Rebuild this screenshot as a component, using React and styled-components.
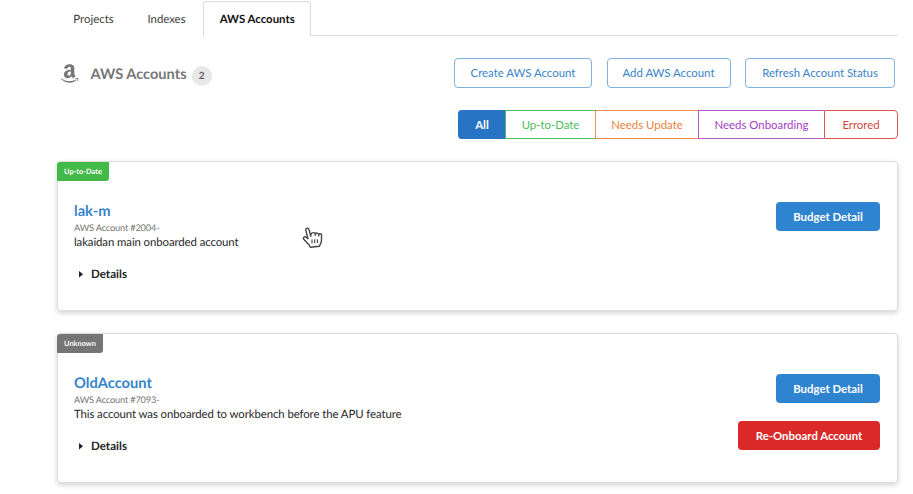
import React from 'react';
import styled, { createGlobalStyle } from 'styled-components';
import { FaAmazon } from 'react-icons/fa';

const Global = createGlobalStyle`
  * { box-sizing: border-box; }
  body {
    margin: 0;
    background: #fff;
    color: #262627;
    font: 11.4px/16px Lato, sans-serif;
    text-rendering: geometricPrecision;
    overflow: hidden;
  }
`;

const Page = styled.main`
  width: 913px;
  height: 494px;
  padding: 1px 15px 0 57px;
  overflow: hidden;
`;

const Tabs = styled.nav`
  display: flex;
  height: 35px;
  border-bottom: 1px solid #dcdcdd;
`;

const Tab = styled.a`
  width: ${(p) => p.$width}px;
  height: 35px;
  padding-top: ${(p) => (p.$active ? 10 : 11)}px;
  text-align: center;
  white-space: nowrap;
  color: ${(p) => (p.$active ? '#111' : '#3c3c3d')};
  font-weight: ${(p) => (p.$active ? 700 : 400)};
  border: ${(p) => (p.$active ? '1px solid #d8d9da' : '0')};
  border-bottom: 0;
  border-radius: 4px 4px 0 0;
  background: #fff;
`;

const Header = styled.header`
  display: flex;
  justify-content: space-between;
  height: 30px;
  margin: 22px 3px 0 2px;
`;

const Title = styled.h3`
  display: flex;
  align-items: center;
  height: 20px;
  margin: 7px 0 0;
  font-size: 14.6px;
  font-weight: 700;
  color: #767676;
  svg { margin: -3px 10.5px 0 0; }
`;

const Count = styled.span`
  width: 20px;
  height: 20px;
  margin: 1px 0 0 5px;
  border-radius: 10px;
  background: #e8e8e8;
  color: #666;
  font-size: 10px;
  line-height: 20px;
  text-align: center;
`;

const Actions = styled.div`
  display: flex;
  gap: 14.5px;
`;

const OutlineButton = styled.button`
  width: ${(p) => p.$width}px;
  height: 30px;
  padding: 0;
  border: 1px solid #7fb0de;
  border-radius: 4px;
  background: #fff;
  color: #3a83c8;
  font: inherit;
  white-space: nowrap;
`;

const Filters = styled.div`
  display: flex;
  justify-content: flex-end;
  margin-top: 22px;
`;

const Filter = styled.button`
  width: ${(p) => p.$width}px;
  height: 29px;
  padding: 0;
  border: 1px solid ${(p) => p.$border};
  border-right-width: ${(p) => (p.$last ? 1 : 0)}px;
  border-radius: ${(p) => (p.$first ? '4px 0 0 4px' : p.$last ? '0 4px 4px 0' : 0)};
  background: ${(p) => (p.$first ? '#2674c3' : '#fff')};
  color: ${(p) => p.$color};
  font: inherit;
  font-weight: ${(p) => (p.$first ? 700 : 400)};
  white-space: nowrap;
`;

const Cards = styled.div`
  display: grid;
  gap: 22px;
  margin-top: 22px;
`;

const Card = styled.section`
  position: relative;
  display: flex;
  justify-content: space-between;
  height: 150px;
  padding: 40px 17px 0 16px;
  border: 1px solid #dcddde;
  border-radius: 4px;
  box-shadow: 0 2px 5px rgba(34, 36, 38, 0.2);
`;

const Status = styled.span`
  position: absolute;
  top: 0;
  left: -1px;
  width: ${(p) => p.$width}px;
  height: 19px;
  border-radius: 3px 0 3px 0;
  background: ${(p) => p.$color};
  color: #fff;
  font-size: 7.4px;
  font-weight: 700;
  line-height: 20px;
  text-align: center;
`;

const Info = styled.div`
  display: flex;
  flex-direction: column;
  align-items: flex-start;
  padding-top: 1px;
  white-space: nowrap;
`;

const Name = styled.h4`
  height: 18px;
  margin: 0;
  color: #3584cb;
  font-size: 14.7px;
  line-height: 16px;
`;

const AccountId = styled.div`
  height: 14px;
  color: #757575;
  font-size: 9.2px;
  line-height: 13px;
  letter-spacing: -0.15px;
`;

const Description = styled.div`
  letter-spacing: -0.09px;
`;

const Details = styled.div`
  display: flex;
  align-items: center;
  gap: 8px;
  margin: 16px 0 0 5px;
  font-weight: 700;
  font-size: 11.6px;
`;

const CardActions = styled.div`
  display: flex;
  flex-direction: column;
  align-items: flex-end;
  gap: 18px;
`;

const SolidButton = styled.button`
  width: ${(p) => p.$width}px;
  height: 29px;
  padding: 0;
  border: 0;
  border-radius: 4px;
  background: ${(p) => p.$color};
  color: #fff;
  font: inherit;
  font-weight: 700;
  white-space: nowrap;
`;

const Cursor = styled.svg`
  position: absolute;
  left: 244px;
  top: 64px;
`;

const filters = [
  { label: 'All', width: 47, color: '#fff', border: '#2674c3' },
  { label: 'Up-to-Date', width: 90, color: '#4bbd59', border: '#4bbd59' },
  { label: 'Needs Update', width: 103, color: '#ec7f40', border: '#f08a50' },
  { label: 'Needs Onboarding', width: 126, color: '#a440c4', border: '#b05bcd' },
  { label: 'Errored', width: 74, color: '#d4453f', border: '#dc5752' },
];

function HandCursor() {
  return (
    <Cursor width="22" height="24" viewBox="0 0 22 24">
      <path
        d="M8.6 9.5L7 3.6C6.3 1.2 3.2 2 3.9 4.6L6 12.6L4 11.2C2.2 10 .5 12 2 13.6L6.5 18.2L8.5 21.3L17.4 20.3L19.4 15.5L19.6 9.2C19.5 7.3 17 7.3 16.8 8.8C16.6 6.9 13.8 6.4 13.3 8C12.8 6.1 9.8 6.2 9.2 8Z"
        fill="#fff" stroke="#444" strokeWidth="1.4" strokeLinejoin="round"
      />
      <path d="M8.6 9.5L9 10.8M13.2 8V10M16.8 9V10.4M10 13.5V17.5M12.7 13.3V17.3M15.4 13.2V17.1" fill="none" stroke="#444" strokeWidth="1.1" />
    </Cursor>
  );
}

function AccountCard({ status, statusColor, statusWidth, name, id, description, reonboard, cursor }) {
  return (
    <Card>
      <Status $color={statusColor} $width={statusWidth}>{status}</Status>
      <Info>
        <Name>{name}</Name>
        <AccountId>{id}</AccountId>
        <Description>{description}</Description>
        <Details>
          <svg width="4" height="8" viewBox="0 0 4 8"><path d="M0 0L4 3.3L0 6.6Z" fill="#222" /></svg>
          Details
        </Details>
      </Info>
      <CardActions>
        <SolidButton $width={104} $color="#2f84cf">Budget Detail</SolidButton>
        {reonboard && <SolidButton $width={142} $color="#db2828">Re-Onboard Account</SolidButton>}
      </CardActions>
      {cursor && <HandCursor />}
    </Card>
  );
}

export default function App() {
  return (
    <Page>
      <Global />
      <Tabs>
        <Tab $width={73}>Projects</Tab>
        <Tab $width={73}>Indexes</Tab>
        <Tab $width={108.4} $active>AWS Accounts</Tab>
      </Tabs>
      <Header>
        <Title>
          <FaAmazon size={21} />
          AWS Accounts
          <Count>2</Count>
        </Title>
        <Actions>
          <OutlineButton $width={138}>Create AWS Account</OutlineButton>
          <OutlineButton $width={124}>Add AWS Account</OutlineButton>
          <OutlineButton $width={150}>Refresh Account Status</OutlineButton>
        </Actions>
      </Header>
      <Filters>
        {filters.map((f, i) => (
          <Filter key={f.label} $width={f.width} $color={f.color} $border={f.border} $first={i === 0} $last={i === filters.length - 1}>
            {f.label}
          </Filter>
        ))}
      </Filters>
      <Cards>
        <AccountCard
          status="Up-to-Date" statusColor="#43b94a" statusWidth={52}
          name="lak-m" id="AWS Account #2004-" description="lakaidan main onboarded account" cursor
        />
        <AccountCard
          status="Unknown" statusColor="#757575" statusWidth={46}
          name="OldAccount" id="AWS Account #7093-" reonboard
          description="This account was onboarded to workbench before the APU feature"
        />
      </Cards>
    </Page>
  );
}
